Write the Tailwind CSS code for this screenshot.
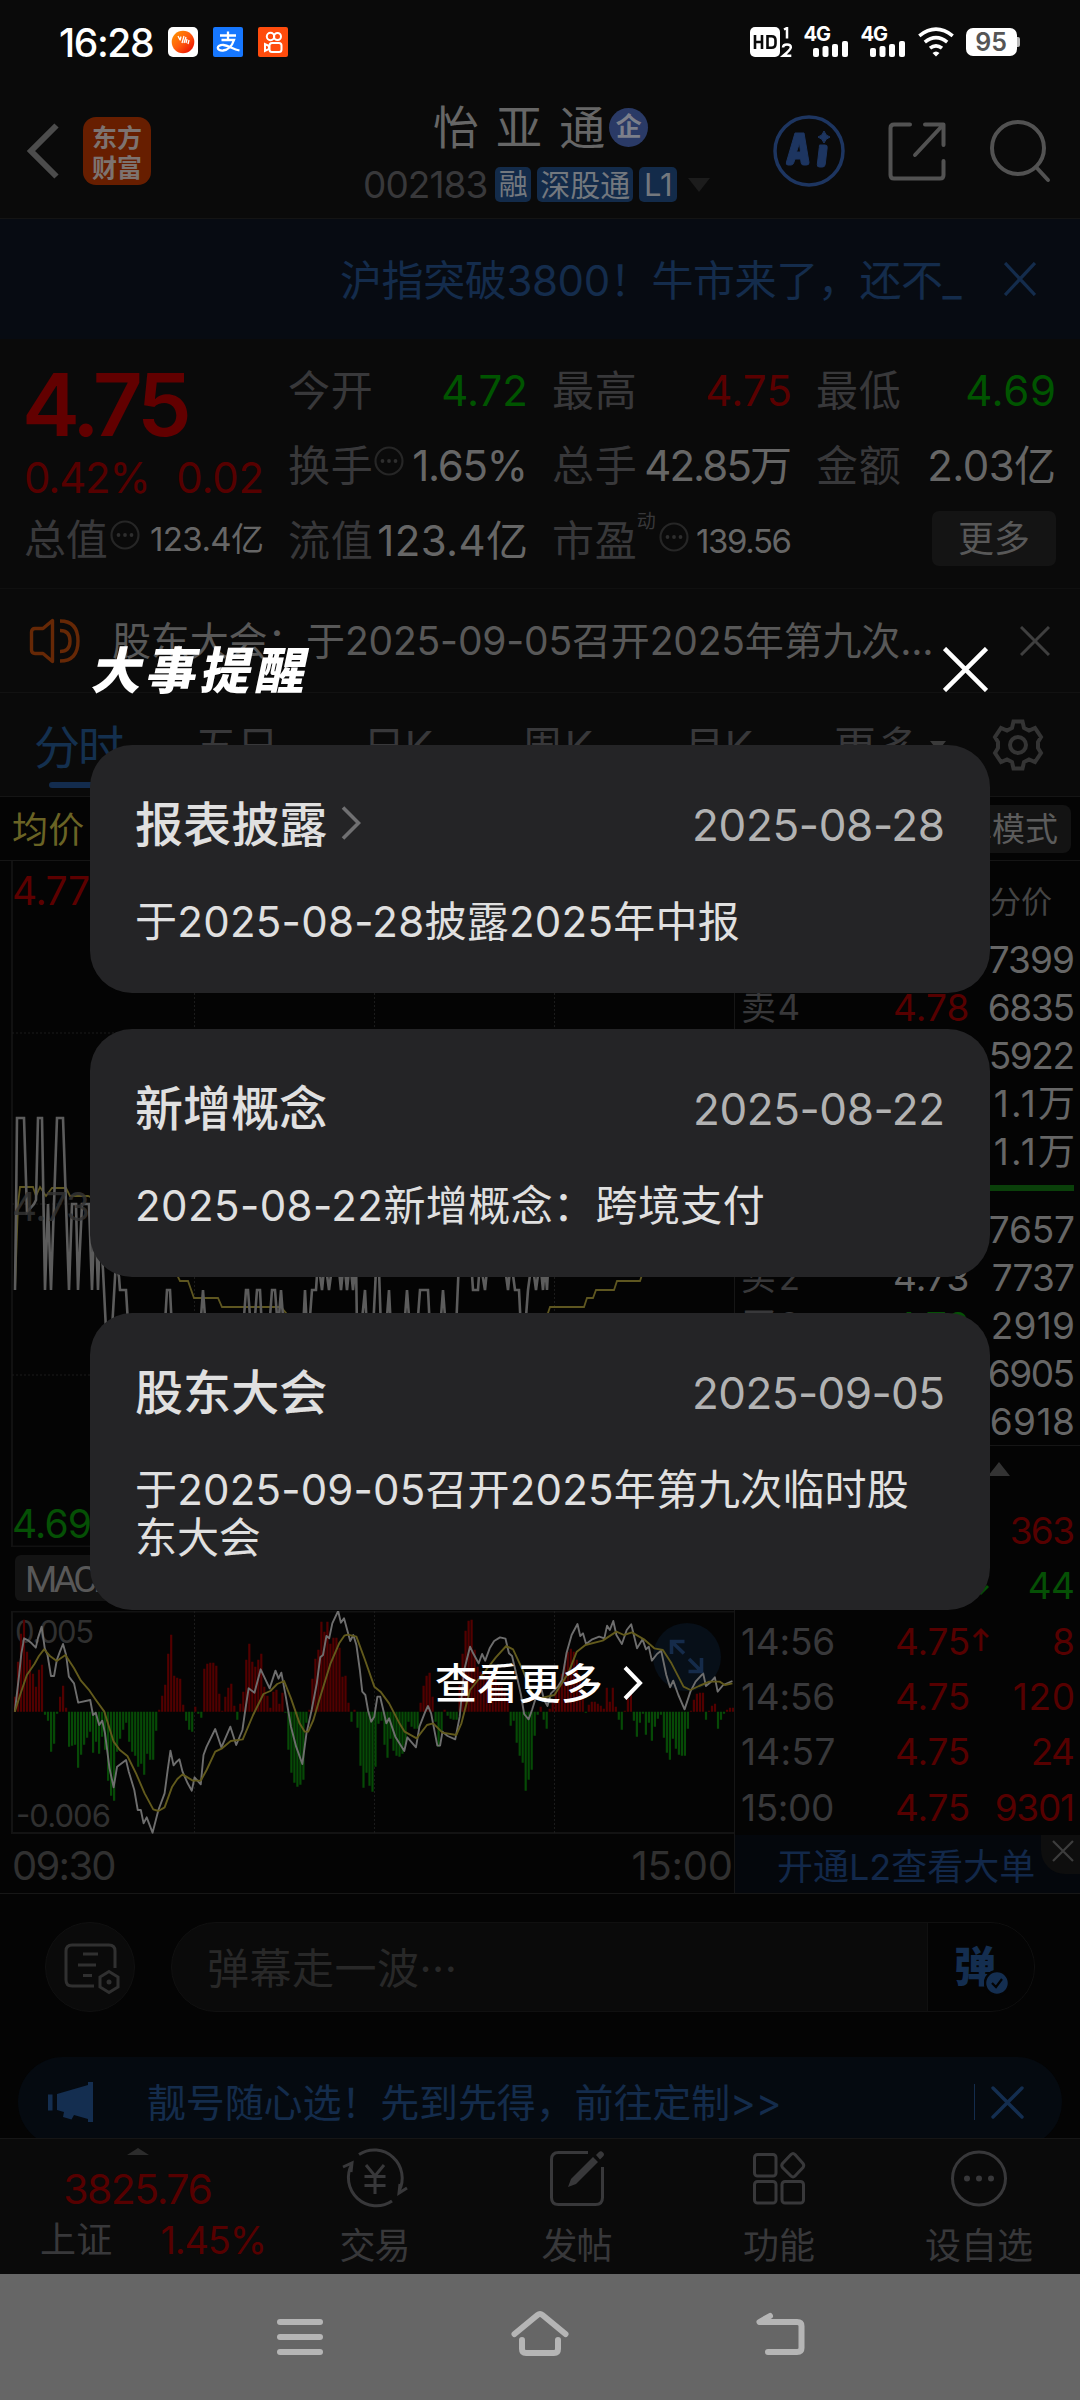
<!DOCTYPE html>
<html lang="zh-CN">
<head>
<meta charset="utf-8">
<title>怡亚通 002183</title>
<script src="https://cdn.jsdelivr.net/npm/@tailwindcss/browser@4"></script>
</head>
<body class="bg-[#040404]">
<div id="screen" class="relative flex h-[2400px] w-[1080px] flex-col overflow-hidden bg-[#040404] font-['Inter','Noto_Sans_CJK_SC',sans-serif] leading-none whitespace-nowrap text-[#666]">

  <!-- status bar -->
  <div class="flex h-[84px] shrink-0 items-center bg-[#0a0a0a] pl-[59px] text-white">
    <span class="text-[39px] font-medium" data-w="92">16:28</span>
    <svg class="ml-[13px]" width="30" height="30" viewBox="0 0 30 30"><defs><linearGradient id="g" x1="0" y1="0" x2="1" y2="1"><stop offset="0" stop-color="#ff9a00"/><stop offset=".5" stop-color="#ff5a0c"/><stop offset="1" stop-color="#e60000"/></linearGradient></defs><rect width="30" height="30" rx="5" fill="#fff"/><circle cx="15" cy="15" r="11.3" fill="url(#g)"/><path d="M10 9l2 4M13 9.500l-1 4M16 9l-2 7M18 10l-2 6M19 12l-1 4M21 13l-1 4" stroke="#fff" stroke-width="1.300"/></svg>
    <span class="ml-[15px] flex h-[30px] w-[30px] items-center justify-center rounded-[2px] bg-[#1677ff]"><svg width="30" height="30" viewBox="0 0 30 30" fill="none" stroke="#fff" stroke-width="2.300"><path d="M15 4.500v8M7 8.500h16M8.500 13h12.500c-2 6-6 10-11 10.500c-7 .5-7-6 .5-5.500c5 .3 9 4 16 5.500"/></svg></span>
    <svg class="ml-[15px]" width="30" height="30" viewBox="0 0 30 30" fill="none" stroke="#fff" stroke-width="2"><rect width="30" height="30" rx="2" fill="#ff4c0d" stroke="none"/><circle cx="12.500" cy="9.500" r="3.700"/><circle cx="19.500" cy="9.500" r="3.500"/><rect x="11.500" y="16" width="12" height="9" rx="2.500"/><path d="M11 19l-4-2v7l4-2z"/></svg>
    <svg class="ml-[462px]" width="44" height="30" viewBox="0 0 44 30"><rect width="30" height="30" rx="5" fill="#fff"/><path d="M5 8v14M12 8v14M5 15h7M17.500 9.300h4q4 0 4 4v3.500q0 4-4 4h-4z" fill="none" stroke="#0a0a0a" stroke-width="2.600"/><path d="M34 2.500l3-1.500v10.500M33 20.500q0-3 4-3t3.800 3q0 2-7.500 8.300h8" fill="none" stroke="#fff" stroke-width="2.500"/></svg>
    <span class="relative ml-[10px] block h-[30px] w-[44px]"><b class="block text-[20px] leading-[15px] font-bold tracking-[-1px]">4G</b><svg class="absolute top-0 left-[9px]" width="35" height="30" fill="#fff"><rect x="0" y="21" width="6" height="9" rx="2"/><rect x="9.500" y="19" width="6" height="11" rx="2"/><rect x="19" y="17" width="6" height="13" rx="2"/><rect x="29" y="14" width="6" height="16" rx="2"/></svg></span>
    <span class="relative ml-[13px] block h-[30px] w-[44px]"><b class="block text-[20px] leading-[15px] font-bold tracking-[-1px]">4G</b><svg class="absolute top-0 left-[9px]" width="35" height="30" fill="#fff"><rect x="0" y="21" width="6" height="9" rx="2"/><rect x="9.500" y="19" width="6" height="11" rx="2"/><rect x="19" y="17" width="6" height="13" rx="2"/><rect x="29" y="14" width="6" height="16" rx="2"/></svg></span>
    <svg class="ml-[13px]" width="36" height="30" viewBox="0 0 36 30" fill="none" stroke="#fff" stroke-width="3.600"><path d="M1.300 8.800q16.700-13.200 33.400 0"/><path d="M6.800 15.200q11.200-9 22.400 0"/><path d="M12 21.200q6-4.800 12 0"/><path d="M14.500 26q3.500-3 7 0L18 29.500z" fill="#fff" stroke="none"/></svg>
    <span class="ml-[12px] flex h-[28px] w-[51px] items-center justify-center rounded-[7px] bg-white text-[25px] font-semibold text-[#555]">95</span><span class="h-[10px] w-[3px] rounded-r-[2px] bg-[#bbb]"></span>
  </div>

  <!-- header -->
  <div class="flex h-[135px] shrink-0 items-center border-b border-[#141414] bg-[#0a0a0a] pl-[26px]">
    <svg width="34" height="58" viewBox="0 0 34 58" fill="none" stroke="#4c4c4c" stroke-width="6"><path d="M30.500 3.500L5 29L30.500 54.500"/></svg>
    <span class="ml-[23px] flex h-[68px] w-[68px] flex-col items-center justify-center gap-[5px] rounded-[13px] bg-[#671e00] font-['Noto_Sans_CJK_SC'] text-[25px] font-bold text-[#7d7370]"><span>东方</span><span>财富</span></span>
    <div class="ml-[212px] flex w-[350px] flex-col pt-[5px]">
      <div class="flex items-center pl-[70px]"><span class="text-[46px]" data-w="168">怡 亚 通</span><span class="ml-[4px] flex h-[39px] w-[39px] items-center justify-center rounded-full bg-[#2a3a66] text-[26px] font-bold text-[#7c7f8a]">企</span></div>
      <div class="mt-[16px] flex items-center text-[30px]"><span class="text-[37px] text-[#38383a]" data-w="122">002183</span>
        <span class="ml-[7px] flex h-[35px] w-[36px] items-center justify-center rounded-[5px] bg-[#132b4a] text-[29px] text-[#73787e]">融</span>
        <span class="ml-[6px] flex h-[35px] w-[96px] items-center justify-center rounded-[5px] bg-[#132b4a] text-[#73787e]">深股通</span>
        <span class="ml-[6px] flex h-[35px] w-[38px] items-center justify-center rounded-[5px] bg-[#132b4a] text-[31px] text-[#73787e]" >L1</span>
        <svg class="ml-[11px]" width="22" height="14"><path d="M0 0h22L11 14z" fill="#1c1c1c"/></svg></div>
    </div>
    <svg class="ml-[60px]" width="72" height="74" viewBox="0 0 72 74"><circle cx="36" cy="37" r="34" fill="none" stroke="#1d3560" stroke-width="3.500"/><path d="M22 19h9l5 29.500q.2 2.500-2.500 2.500h-3q-2 0-2.300-2l-.6-4h-5.500l-1.500 4q-.7 2-2.600 2h-3q-2.500 0-1.500-3zM26.500 29l-3 9h4z M46.500 31h5.500q2.500 0 2.200 2.500l-2 17q-.4 2.500-2.700 2.500h-3q-2.500 0-2.200-2.500l2-17q.2-2.500.2-2.500z M51 17q1.500 5 6 6q-4.500 1.500-6 6q-1.500-4.500-6-6q4.500-1 6-6z" fill="#1d3560" stroke="#1d3560" stroke-width="1" fill-rule="evenodd"/></svg>
    <svg class="ml-[43px]" width="58" height="60" viewBox="0 0 58 60" fill="none" stroke="#525252" stroke-width="4" stroke-linecap="round" stroke-linejoin="round"><path d="M22 3.500H6Q2.500 3.500 2.500 7v47Q2.500 57.500 6 57.500h46Q55.500 57.500 55.500 54V40M37 3.500h18.500V24M54 5L27 34"/></svg>
    <svg class="ml-[44px]" width="62" height="64" viewBox="0 0 62 64" fill="none" stroke="#525252" stroke-width="4" stroke-linecap="round"><circle cx="28" cy="29" r="26"/><path d="M46 48l12 13"/></svg>
  </div>

  <!-- scrolling banner -->
  <div class="flex h-[120px] shrink-0 items-center overflow-hidden bg-[#070b12] pt-[3px] pl-[340px] text-[42px] text-[#142c4c]">
    <span class="w-[620px] leading-[50px]"><span class="inline-block" data-w="618">沪指突破3800！牛市来了，还不_</span></span>
    <svg class="mb-[4px] ml-[44px]" width="32" height="34" viewBox="0 0 32 34" stroke="#142c4c" stroke-width="3.300"><path d="M1 1L31 33M31 1L1 33"/></svg>
  </div>

  <!-- quote -->
  <div class="flex h-[250px] shrink-0 gap-[24px] border-b border-[#101010] bg-[#0a0a0a] pt-[14px] pl-[24px] text-[42px]">
    <div class="w-[240px]">
      <div class="flex h-[102px] items-center text-[87px] font-semibold text-[#620000]"><span class="ml-[-2px]" data-w="162">4.75</span></div>
      <div class="flex h-[46px] items-center justify-between text-[42px] text-[#560000]"><span data-w="123">0.42%</span><span data-w="84">0.02</span></div>
      <div class="flex h-[77px] items-center text-[#38383a]"><span data-w="80">总值</span><svg class="mb-[9px] ml-[2px] info" width="30" height="30"></svg><span class="ml-auto text-[33px] text-[#666]" data-w="111">123.4亿</span></div>
    </div>
    <div class="grid w-[768px] grid-cols-[240px_240px_240px] grid-rows-[75px_75px_76px] gap-x-[24px] text-[#38383a]">
      <div class="flex items-center justify-between"><span data-w="81">今开</span><span class="text-[#005400]" data-w="83">4.72</span></div>
      <div class="flex items-center justify-between"><span data-w="81">最高</span><span class="text-[#5a0000]" data-w="83">4.75</span></div>
      <div class="flex items-center justify-between"><span data-w="81">最低</span><span class="text-[#005400]" data-w="87">4.69</span></div>
      <div class="flex items-center"><span data-w="81">换手</span><svg class="mb-[9px] ml-[1px] info" width="30" height="30"></svg><span class="ml-auto text-[#666]" data-w="112">1.65%</span></div>
      <div class="flex items-center justify-between"><span data-w="81">总手</span><span class="text-[#666]" data-w="144">42.85万</span></div>
      <div class="flex items-center justify-between"><span data-w="81">金额</span><span class="text-[#666]" data-w="125">2.03亿</span></div>
      <div class="flex items-center justify-between"><span data-w="81">流值</span><span class="text-[#666]" data-w="147">123.4亿</span></div>
      <div class="flex items-center"><span data-w="81">市盈</span><span class="mb-[40px] text-[19px]">动</span><svg class="mb-[9px] ml-[3px] info" width="30" height="30"></svg><span class="ml-auto text-[33px] text-[#666]" data-w="93">139.56</span></div>
      <div class="flex items-center justify-end"><span class="mb-[5px] flex h-[55px] w-[124px] items-center justify-center rounded-[7px] bg-[#141414] text-[36px] text-[#585858]">更多</span></div>
    </div>
  </div>

  <!-- announcement -->
  <div class="flex h-[104px] shrink-0 items-center border-b border-[#121212] bg-[#0a0a0a] pl-[28px]">
    <svg width="54" height="46" viewBox="0 0 54 46" fill="none" stroke="#662806" stroke-width="3.400"><path d="M24.500 2.500v41L15 35.500H7Q3.500 35.500 3.500 32V14Q3.500 10.500 7 10.500h8z" stroke-linejoin="round"/><path d="M32 12.500q10 0 10 10.500t-10 10.500M32 3q18 0 18 20t-18 20"/></svg>
    <span class="ml-[30px] text-[39px] text-[#585858]" data-w="818">股东大会：于2025-09-05召开2025年第九次...</span>
    <svg class="ml-[86px]" width="30" height="30" viewBox="0 0 30 30" stroke="#3f3f3f" stroke-width="3"><path d="M1 1L29 29M29 1L1 29"/></svg>
  </div>

  <!-- period tabs -->
  <div class="flex h-[104px] shrink-0 border-b border-[#151515] bg-[#0a0a0a] text-[42px] text-[#38383a]">
    <div class="flex w-[158px] flex-col items-center pt-[31px] text-[#14304f]"><span class="text-[46px]" data-w="86">分时</span><span class="mt-[12px] h-[6px] w-[60px] rounded-full bg-[#132c4e]"></span></div>
    <div class="flex w-[158px] justify-center pt-[33px]"><span data-w="80">五日</span></div>
    <div class="flex w-[164px] justify-center pt-[33px]"><span data-w="66">日K</span></div>
    <div class="flex w-[154px] justify-center pt-[33px]"><span data-w="68">周K</span></div>
    <div class="flex w-[168px] justify-center pt-[33px]"><span data-w="66">月K</span></div>
    <div class="flex w-[182px] pt-[33px] pl-[32px]"><span data-w="82">更多</span><svg class="mt-[15px] ml-[10px]" width="16" height="10"><path d="M0 0h16L8 10z" fill="#3a3a3a"/></svg></div>
    <svg class="mt-[25px] ml-[7px]" width="54" height="54" viewBox="0 0 54 54" fill="none" stroke="#343434" stroke-width="4"><circle cx="27" cy="27" r="8"/><path d="M22.500 3.500h9l1.500 6.500l5 2.500l6-2.500l6 9l-3 5v6l3 5l-6 9l-6-2.500l-5 2.500l-1.500 6.500h-9l-1.500-6.500l-5-2.500l-6 2.500l-6-9l3-5v-6l-3-5l6-9l6 2.500l5-2.500z"/></svg>
  </div>

  <!-- legend -->
  <div class="flex h-[64px] shrink-0 items-center justify-between border-b border-[#151515] pr-[9px] pl-[12px]">
    <span class="pt-[2px] text-[36px] text-[#6a6324]" data-w="69">均价</span>
    <span class="flex h-[48px] items-center rounded-[8px] bg-[#131313] px-[13px] pt-[2px] text-[33px] text-[#5c5c5c]">简单模式</span>
  </div>

  <!-- charts and order book -->
  <div class="flex h-[1032px] shrink-0">
    <div class="w-[734px]">
      <svg class="block" width="734" height="686" viewBox="0 861 734 686" fill="none">
        <path d="M12 861V1546.500H734" stroke="#111" stroke-width="2"/>
        <path d="M12 1033H734M12 1204H734M12 1375H734M194.500 861V1546M374.500 861V1546M554.500 861V1546" stroke="#1b1b1b" stroke-dasharray="2 2"/>
        <path d="M15 1290L18 1204L20 1187H33L36 1196L40 1187L46 1196L52 1188H66L70 1196H88L120 1210L170 1250L178 1277L180 1281H188L194 1298H218L222 1307H281L300 1330H530L548 1313L550 1307H584L587 1298H593L596 1290H614L617 1281H640L643 1272L720 1240" stroke="#5e5620" stroke-width="1.800"/>
        <path d="M15 1290L16 1215L17 1118H24L27 1212L34 1204L36 1200L38 1118H42L45 1290L48 1204L51 1290L54 1204L57 1118H63L66 1204L69 1290L72 1204H76L78 1290L82 1204H89L92 1290L95 1204L98 1290L100 1230L103 1270L106 1330L112 1330L116 1260L119 1277L120 1290H126L129 1340H164L167 1290H170L172 1330H200L203 1290L206 1330H243L246 1290H248L251 1330H254L257 1290H260L262 1330H269L272 1290H275L278 1330L281 1290L284 1330H303L305 1290L307 1330H309L312 1290H316L318 1260L322 1290L325 1260L329 1290L333 1260H338L341 1290L344 1260L347 1290L350 1260L353 1290L356 1260L357 1330H361L365 1290L367 1330H373L376 1270L379 1270L381 1330H386L389 1290L391 1330H404L407 1290L410 1330H417L420 1290H428L430 1330H440L443 1290L446 1330H456L459 1260H471L473 1290H478L480 1260L485 1290L488 1260H504L508 1290L511 1260L515 1290H519L521 1330H525L528 1290L532 1260L536 1290L540 1260L543 1290L545 1265L547 1290L549 1250" stroke="#5c5c5c" stroke-width="2.600"/>
        <g font-family="Inter" font-size="39"><text x="12" y="1221" fill="#333" fill-opacity=".85" textLength="78">4.73</text><text x="12" y="905" fill="#5c0000" textLength="78">4.77</text><text x="12" y="1538" fill="#055005" textLength="80">4.69</text></g>
      </svg>
      <div class="flex h-[64px] items-center pl-[15px]"><span class="mt-[-2px] flex h-[46px] items-center rounded-[6px] bg-[#131313] px-[10px] pt-[2px] font-['Roboto'] text-[37px] text-[#585858]"><span data-w="89">MACD</span></span></div>
      <svg class="block" width="734" height="223" viewBox="0 1611 734 223" fill="none">
        <path d="M734 1611.500H12V1833H734" stroke="#131313" stroke-width="2"/>
        <path d="M194.500 1611V1833M374.500 1611V1833M554.500 1611V1833" stroke="#1b1b1b" stroke-dasharray="2 2"/>
        <g font-family="Inter" font-size="31" fill="#303030"><text x="15" y="1643" textLength="79">0.005</text><text x="16" y="1827" textLength="95">-0.006</text></g>
        <path id="up" stroke="#520000" stroke-width="2.200"/>
        <path id="down" stroke="#064a06" stroke-width="2.200"/>
        <circle cx="687" cy="1657" r="34" fill="#070f18"/>
        <g transform="translate(0 1580) scale(.34435 .33333)" stroke-width="1.900" stroke-linejoin="round">
          <polyline vector-effect="non-scaling-stroke" stroke="#6e6e6e" points="43,395 55,290 62,220 70,175 80,180 92,190 104,203 110,175 121,140 130,205 138,225 148,288 157,288 165,240 174,215 183,192 192,225 200,290 215,310 227,368 262,360 270,405 278,398 288,435 297,422 305,460 318,565 330,622 340,560 366,540 374,575 390,630 400,690 409,690 417,730 426,712 443,758 460,690 478,640 487,570 495,512 504,556 513,545 521,538 530,575 545,610 557,632 565,592 583,613 591,525 600,500 625,447 643,502 669,440 686,495 704,450 713,385 722,325 739,338 757,268 783,325 800,272 809,296 817,278 830,350 845,440 860,500 878,552 890,460 905,390 920,310 930,232 938,225 948,168 956,175 965,130 982,93 990,128 999,115 1017,183 1026,165 1035,195 1045,270 1052,335 1061,345 1069,392 1078,425 1087,410 1096,350 1104,350 1122,430 1130,415 1148,470 1174,513 1183,472 1208,502 1218,440 1235,395 1243,378 1252,400 1270,497 1278,497 1285,455 1300,468 1322,478 1335,410 1348,270 1365,200 1374,220 1390,250 1400,222 1409,242 1422,205 1435,183 1452,172 1468,176 1478,220 1487,228 1500,285 1513,345 1522,402 1535,418 1545,390 1557,350 1573,330 1580,360 1590,378 1600,340 1620,320 1632,300 1645,220 1660,165 1677,132 1685,168 1693,160 1702,192 1720,178 1740,170 1755,175 1763,137 1771,150 1781,123 1790,165 1806,192 1820,150 1833,133 1850,205 1866,178 1876,208 1884,200 1893,242 1908,222 1920,212 1935,285 1946,322 1955,302 1970,345 1988,388 2005,335 2020,305 2042,280 2050,318 2065,305 2076,292 2084,335 2100,315 2127,303"/>
          <polyline vector-effect="non-scaling-stroke" stroke="#625a1c" points="43,395 60,340 78,285 100,252 113,228 128,208 145,228 165,243 190,225 215,265 235,302 260,332 280,362 303,395 330,485 348,510 370,528 395,580 420,640 445,688 460,693 478,682 500,620 515,597 530,583 560,602 583,602 600,570 625,515 645,505 670,483 705,478 735,405 765,342 785,333 805,312 825,303 845,355 870,430 885,455 895,455 910,420 930,350 960,250 985,190 1000,167 1010,164 1035,170 1060,240 1087,320 1105,335 1130,370 1160,430 1175,455 1210,475 1240,435 1258,430 1285,458 1325,465 1340,430 1365,330 1400,285 1440,232 1470,198 1490,208 1520,275 1545,340 1568,355 1610,345 1650,280 1675,215 1700,195 1750,182 1790,155 1812,165 1835,157 1870,178 1900,205 1925,210 1950,250 1985,320 2005,330 2030,318 2060,305 2090,305 2105,315 2127,310"/>
        </g>
        <path d="M671.500 1654V1641.500H684.500M672 1642L684 1653.500M701.500 1658V1671.500H688.500M701 1671L689 1659" stroke="#152b4a" stroke-width="3.600"/>
      </svg>
      <div class="flex h-[59px] items-center justify-between pr-[1px] pl-[12px] pt-[4px] text-[40px] text-[#303030]"><span data-w="101">09:30</span><span data-w="98">15:00</span></div>
    </div>

    <div class="flex w-[346px] flex-col border-l border-[#161616]">
      <div class="flex h-[74px] items-center justify-between pt-[6px] pr-[28px] pl-[38px] text-[31px] text-[#444]"><span>五档</span><span>明细</span><span>分价</span></div>
      <div id="asks"></div>
      <div class="flex h-[30px] items-center pr-[6px]"><span class="mb-[4px] h-[6px] w-[130px] bg-[#5c0000]"></span><span class="mb-[4px] h-[6px] flex-1 bg-[#0a400a]"></span></div>
      <div id="bids" class="border-b border-[#161616]"></div>
      <div class="flex h-[57px] justify-end pt-[16px] pr-[70px]"><svg width="22" height="14"><path d="M11 0L22 14H0z" fill="#333"/></svg></div>
      <div id="ticks"></div>
      <div class="relative flex flex-1 items-center bg-[#04070c] pt-[6px] pl-[42px] text-[36px] text-[#12284a]"><span data-w="255">开通L2查看大单</span>
        <span class="absolute top-0 right-0 flex h-[39px] w-[39px] items-center justify-center rounded-bl-[24px] bg-[#0e0e0e] pr-[1px] pb-[6px] pl-[6px]"><svg width="22" height="22" viewBox="0 0 22 22" stroke="#3d3d3d" stroke-width="2.200"><path d="M1 1L21 21M21 1L1 21"/></svg></span></div>
    </div>
  </div>

  <!-- comment bar -->
  <div class="flex h-[164px] shrink-0 items-start border-t border-[#171717] pt-[28px] pl-[45px]">
    <span class="flex h-[90px] w-[90px] items-center justify-center rounded-full border border-[#101010] bg-[#0a0a0a]"><svg class="mt-[4px] ml-[3px]" width="56" height="52" viewBox="0 0 56 52" fill="none" stroke="#303030" stroke-width="3"><path d="M51 25V8Q51 2 45 2H8Q2 2 2 8v29Q2 43 8 43H30M19 11h15M14 22h18M19 32.500h9"/><path d="M45 28.500l9 5.500v10l-9 5.500l-9-5.500V34z"/><circle cx="45" cy="39" r="2.500" fill="#303030" stroke="none"/></svg></span>
    <div class="ml-[36px] flex h-[90px] w-[864px] overflow-hidden rounded-full border border-[#101010] bg-[#0a0a0a]">
      <span class="flex-1 pt-[25px] pl-[35px] text-[42px] text-[#282828]"><span class="inline-block" data-w="246">弹幕走一波···</span></span>
      <span class="relative w-[107px] border-l border-[#101010] bg-[#040404] pt-[23px] pl-[26px] text-[42px] font-black text-[#142e50]">弹<svg class="absolute top-[47px] left-[56px]" width="26" height="26"><circle cx="13" cy="13" r="12" fill="#142e50" stroke="#040404" stroke-width="2.500"/><path d="M8 13l4 4l6-8" fill="none" stroke="#040404" stroke-width="2.200"/></svg></span>
    </div>
  </div>

  <!-- promo strip -->
  <div class="h-[81px] shrink-0 overflow-hidden px-[18px]">
    <div class="flex h-[90px] items-center rounded-full bg-[#050a10] pl-[30px] text-[39px] text-[#142c4c]">
      <svg width="46" height="42" viewBox="0 0 46 42" fill="#142e50"><path d="M0 13.500h4.500v16H0zM9 13L40 4V1h5v40h-5v-3l-14-4l-2.500 4.500L15 36l1-5l-7-2z"/></svg>
      <span class="ml-[53px]" data-w="631">靓号随心选！先到先得，前往定制&gt;&gt;</span>
      <span class="ml-auto h-[36px] w-[1.500px] bg-[#142c4c]"></span>
      <svg class="mr-[38px] ml-[16px]" width="33" height="33" viewBox="0 0 33 33" stroke="#142e50" stroke-width="3.400" stroke-linecap="round"><path d="M2 2L31 31M31 2L2 31"/></svg>
    </div>
  </div>

  <!-- bottom tabs -->
  <div class="flex h-[136px] shrink-0 border-t border-[#161616] bg-[#0a0a0a] text-[36px] text-[#38383a]">
    <div class="flex w-[276px] flex-col items-center pt-[9px]">
      <svg width="22" height="7"><path d="M11 0L22 7H0z" fill="#2c2c2c"/></svg>
      <span class="mt-[14px] text-[41px] text-[#560000]" data-w="146">3825.76</span>
      <span class="mt-[11px] ml-[30px] flex w-[228px] items-center justify-between pl-[1px]"><span data-w="69">上证</span><span class="text-[38px] text-[#560000]" data-w="103">1.45%</span></span>
    </div>
    <div class="flex w-[198px] flex-col items-center pt-[7px]">
      <svg width="66" height="64" viewBox="0 0 66 64" fill="none" stroke="#38383a" stroke-width="3"><path d="M17 8.500A28 28 0 0 1 57 45M50 55A28 28 0 0 1 10 18M1 21l9-4l-1 9M65 42l-8 5l1-9M24 19l9 11l9-11M22.500 30.500h21M22.500 39.500h21M33 30v18"/></svg>
      <span class="mt-[18px]" data-w="68">交易</span></div>
    <div class="flex w-[206px] flex-col items-center pt-[7px]">
      <svg width="66" height="64" viewBox="0 0 66 64" fill="none" stroke="#38383a" stroke-width="3"><path d="M44 6.500H14.500Q7.500 6.500 7.500 13.500v38Q7.500 58.500 14.500 58.500h37Q58.500 58.500 58.500 51.500V21"/><path d="M24 41l3-8l22-22l5 5l-22 22zM52 9l3-3q2-1.500 4 .5t0 4l-3 3z" fill="#38383a" stroke="none"/></svg>
      <span class="mt-[18px]" data-w="68">发帖</span></div>
    <div class="flex w-[198px] flex-col items-center pt-[7px]">
      <svg width="66" height="64" viewBox="0 0 66 64" fill="none" stroke="#38383a" stroke-width="3"><rect x="8.500" y="8.500" width="21.500" height="21.500" rx="3"/><rect x="8.500" y="35.500" width="21.500" height="21.500" rx="3"/><rect x="36" y="35.500" width="21.500" height="21.500" rx="3"/><path d="M45 8.500q2-2 4 0L57 17.500q1.500 2 0 4L49 30q-2 2-4 0L36.500 21.500q-1.500-2 0-4z"/></svg>
      <span class="mt-[18px]" data-w="69">功能</span></div>
    <div class="flex w-[202px] flex-col items-center pt-[7px]">
      <svg width="66" height="64" viewBox="0 0 66 64" fill="#38383a"><circle cx="33" cy="32.500" r="26.500" fill="none" stroke="#38383a" stroke-width="3"/><circle cx="21" cy="32.500" r="3"/><circle cx="33" cy="32.500" r="3"/><circle cx="45" cy="32.500" r="3"/></svg>
      <span class="mt-[18px]" data-w="105">设自选</span></div>
  </div>

  <!-- system navigation -->
  <div class="flex h-[126px] shrink-0 items-center bg-[#666] pl-[277px]">
    <svg width="46" height="36" fill="#b5b5b5"><rect width="46" height="6" rx="3"/><rect y="15" width="46" height="6" rx="3"/><rect y="30" width="46" height="6" rx="3"/></svg>
    <svg class="mb-[8px] ml-[188px]" width="58" height="46" viewBox="0 0 58 46" fill="none" stroke="#b5b5b5" stroke-width="6" stroke-linecap="round" stroke-linejoin="round"><path d="M3.500 24L26.500 5Q29 3 31.500 5L54.500 24M11 30v9q0 4 4 4h28q4 0 4-4v-9"/></svg>
    <svg class="mb-[6px] ml-[187px]" width="49" height="44" viewBox="0 0 49 44" fill="none" stroke="#b5b5b5" stroke-width="6" stroke-linecap="round" stroke-linejoin="round"><path d="M14 4L3.500 10H41Q45.500 10 45.500 14V36Q45.500 40 41 40H12"/></svg>
  </div>

  <!-- event reminder dialog -->
  <div class="absolute inset-0 flex flex-col px-[90px] pt-[640px]">
    <div class="flex h-[60px] items-center justify-between pr-[2px] pl-[4px] text-white">
      <span class="inline-block -skew-x-12 pt-[2px] text-[50px] font-black" data-w="209">大事提醒</span>
      <svg class="mb-[2px]" width="45" height="45" viewBox="0 0 45 45" stroke="#fff" stroke-width="4.500"><path d="M1.500 1.500L43.500 43.500M43.500 1.500L1.500 43.500"/></svg>
    </div>
    <div class="mt-[45px] flex flex-col gap-[36px] text-[42px] leading-[48px] text-[#e0e0e0]">
      <div class="rounded-[42px] bg-[#242426] px-[45px] pt-[54px] pb-[47px]">
        <div class="flex h-[52px] items-center"><span class="text-[48px] font-medium" data-w="188">报表披露</span><svg class="mb-[5px] ml-[14px]" width="20" height="34" viewBox="0 0 20 34" fill="none" stroke="#707072" stroke-width="3.600"><path d="M2 1.500L17.500 17L2 32.500"/></svg><span class="ml-auto text-[44px] text-[#b2b2b2]" data-w="249">2025-08-28</span></div>
        <div class="mt-[47px] flex"><span data-w="601">于2025-08-28披露2025年中报</span></div>
      </div>
      <div class="rounded-[42px] bg-[#242426] px-[45px] pt-[54px] pb-[47px]">
        <div class="flex h-[52px] items-center"><span class="text-[48px] font-medium" data-w="188">新增概念</span><span class="ml-auto text-[44px] text-[#b2b2b2]" data-w="248">2025-08-22</span></div>
        <div class="mt-[47px] flex"><span data-w="626">2025-08-22新增概念：跨境支付</span></div>
      </div>
      <div class="rounded-[42px] bg-[#242426] px-[45px] pt-[54px] pb-[48px]">
        <div class="flex h-[52px] items-center"><span class="text-[48px] font-medium" data-w="188">股东大会</span><span class="ml-auto text-[44px] text-[#b2b2b2]" data-w="249">2025-09-05</span></div>
        <div class="mt-[47px] flex flex-col items-start"><span data-w="770">于2025-09-05召开2025年第九次临时股</span><span data-w="122">东大会</span></div>
      </div>
    </div>
    <div class="mt-[48px] flex h-[50px] items-center pl-[345px] text-[42px] font-medium text-white"><span class="pt-[2px]" data-w="164">查看更多</span><svg class="ml-[20px]" width="20" height="34" viewBox="0 0 20 34" fill="none" stroke="#fff" stroke-width="4"><path d="M2 1.500L17 17L2 32.500"/></svg></div>
  </div>
</div>

<script>
  // info badges
  document.querySelectorAll('svg.info').forEach(s => s.innerHTML =
    '<g fill="#2e2e2e"><circle cx="15" cy="15" r="13.500" fill="none" stroke="#262626" stroke-width="2.200"/><circle cx="8.500" cy="15" r="1.900"/><circle cx="15" cy="15" r="1.900"/><circle cx="21.500" cy="15" r="1.900"/></g>');

  // order book
  const R = 'text-[#560000]', G = 'text-[#055005]', W = 'text-[#666]';
  const book = rows => rows.map(([n, p, c, v, w]) =>
    `<div class="flex h-[48px] items-center pr-[5px] pl-[6px] text-[37px]"><span class="w-[152px] text-[35px] text-[#38383a]"><span class="inline-block" data-w="56">${n}</span></span><span class="${c}" data-w="73">${p}</span><span class="ml-auto text-[#666]" data-w="${w}">${v}</span></div>`).join('');
  document.getElementById('asks').innerHTML = book([['卖5','4.79',R,'7399',83],['卖4','4.78',R,'6835',84],['卖3','4.77',R,'5922',83],['卖2','4.76',R,'1.1万',78],['卖1','4.75',R,'1.1万',78]]);
  document.getElementById('bids').innerHTML = book([['买1','4.74',R,'7657',83],['买2','4.73',W,'7737',80],['买3','4.72',G,'2919',81],['买4','4.71',G,'6905',84],['买5','4.70',G,'6918',82]]);

  // trades
  document.getElementById('ticks').innerHTML = [['14:56','4.75','','363',R,62],['14:56','4.74','d','44',G,44],['14:56','4.75','u','8',R,0],['14:56','4.75','','120',R,59],['14:57','4.75','','24',R,41],['15:00','4.75','','9301',R,77]].map(([t, p, a, v, c, w]) =>
    `<div class="flex h-[55.300px] items-center pr-[5px] pl-[6px] text-[37px] ${c}"><span class="w-[154px] text-[#38383a]"><span class="inline-block" data-w="${t === '15:00' ? 90 : 91}">${t}</span></span><span data-w="72">${p}</span>` +
    (a ? `<svg class="mb-[4px] ml-[2px]" width="18" height="24" fill="none" stroke="currentColor" stroke-width="3"><path d="${a === 'u' ? 'M9 24V3M2 10L9 3L16 10' : 'M9 0V21M2 14L9 21L16 14'}"/></svg>` : '') +
    `<span class="ml-auto" ${w ? `data-w="${w}"` : ''}>${v}</span></div>`).join('');

  // MACD histogram, one value per minute
  const h = [15,50,78,92,60,52,38,25,42,47,-3,-9,-40,-32,-2,15,26,4,-35,-34,-33,-56,-43,-33,-26,-20,-41,-30,-42,-25,-38,-69,-84,-89,-40,-27,-18,-11,-30,-40,-44,-55,-52,-63,-42,-48,-48,-19,2,16,27,58,77,36,34,33,7,-9,-18,-20,5,-2,-6,43,48,49,49,46,18,1,15,24,28,6,-8,8,20,52,68,50,45,52,58,25,16,4,20,22,8,19,-1,-38,-61,-71,-75,-73,-68,-11,2,33,53,62,90,80,90,68,74,74,64,35,36,9,-10,2,-16,-54,-76,-61,-74,-80,-55,-12,-9,-33,-46,-27,-39,-44,-45,-42,-33,-10,-15,-17,-17,9,26,36,39,15,-10,-35,-20,2,-4,-7,-8,-8,27,58,81,91,92,62,45,40,38,35,38,36,34,30,26,20,12,-14,-9,-31,-44,-51,-79,-68,-58,-24,-3,5,-8,-17,3,12,20,28,38,48,60,63,60,52,36,16,-1,7,10,10,8,6,3,24,10,24,5,-8,-18,1,13,19,-9,-25,-11,-2,-23,-11,-29,-15,-7,-3,-26,-41,-48,-27,-37,-43,-44,-44,-17,1,12,18,19,19,-8,1,6,8,-17,-8,-2,2,4,4];
  const bars = f => h.map((v, i) => f(v) ? `M${(15 + i * 718 / (h.length - 1)).toFixed(1)} 1711.700V${1711.700 - v}` : '').join('');
  document.getElementById('up').setAttribute('d', bars(v => v > 0));
  document.getElementById('down').setAttribute('d', bars(v => v < 0));

  // tracking: data-w holds the visible width of a label in px
  const labels = [...document.querySelectorAll('[data-w]')];
  function fit() {
    labels.forEach(el => { el.style.letterSpacing = '0px'; el.style.marginRight = '0px'; });
    const sizes = labels.map(el => {
      const r = document.createRange();
      r.selectNodeContents(el);
      return el.matches('.font-black') ? el.offsetWidth : r.getBoundingClientRect().width;
    });
    labels.forEach((el, i) => {
      const size = parseFloat(getComputedStyle(el).fontSize);
      const gap = (+el.dataset.w + size * 0.09 - sizes[i]) / ([...el.textContent].length - 1);
      el.style.letterSpacing = gap + 'px';
      el.style.marginRight = -gap + 'px';
    });
  }
  fit();
  addEventListener('load', fit);
  document.fonts.ready.then(fit);
  new ResizeObserver(fit).observe(document.getElementById('screen'));
</script>
</body>
</html>
